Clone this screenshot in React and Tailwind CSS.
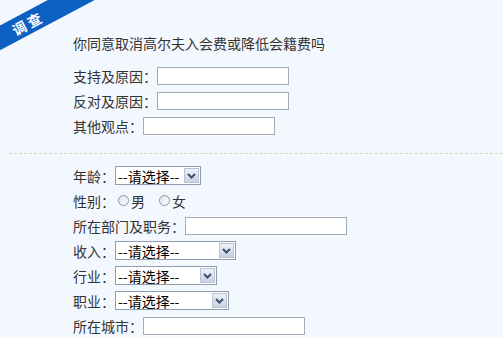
import React from "react";

const font = { fontFamily: '"Noto Sans CJK SC", "Liberation Sans", sans-serif' };

function Input({ w }) {
  return <div className={`h-[18px] ${w} border border-[#a3abb5] bg-white`} />;
}

function Select({ w }) {
  return (
    <div className={`h-[19px] ${w} border border-[#8e9db3] bg-white flex items-center justify-between pl-[2px] pr-[1px]`}>
      <span className="text-[14px] leading-none text-black">--请选择--</span>
      <div className="w-[15px] h-[15px] border border-[#b9c3d3] bg-gradient-to-b from-[#eef1f7] to-[#c9d2e2] flex items-center justify-center">
        <svg width="9" height="6" viewBox="0 0 9 6">
          <path d="M1 1 L4.5 4.5 L8 1" stroke="#3c4f73" strokeWidth="2" fill="none" />
        </svg>
      </div>
    </div>
  );
}

function Radio() {
  return (
    <div className="w-[11px] h-[11px] rounded-full border border-[#8a96a6] bg-gradient-to-br from-[#dfe3ea] to-white" />
  );
}

function Row({ label, children }) {
  return (
    <div className="h-[25px] flex items-center">
      <span className="text-[14px] leading-none text-[#333]">{label}</span>
      {children}
    </div>
  );
}

export default function App() {
  return (
    <div className="relative w-[503px] h-[338px] overflow-hidden bg-[#f3f8fe]" style={font}>
      <div className="absolute left-[-52px] top-[12px] w-[160px] h-[22px] bg-[#0c60c2] -rotate-[28deg] flex items-center justify-center">
        <span className="text-white text-[14px] font-bold leading-none tracking-[3px]">调查</span>
      </div>

      <div className="pl-[73px] pt-[30px]">
        <div className="h-[25px] flex items-center text-[14px] leading-none text-[#333]">
          你同意取消高尔夫入会费或降低会籍费吗
        </div>
        <div className="mt-[8px]">
          <Row label="支持及原因："><Input w="w-[132px]" /></Row>
          <Row label="反对及原因："><Input w="w-[132px]" /></Row>
          <Row label="其他观点："><Input w="w-[132px]" /></Row>
        </div>
      </div>

      <div className="ml-[9px] mt-[15px] border-t border-dashed border-[#d6dabc]" />

      <div className="pl-[73px] pt-[9px]">
        <Row label="年龄："><Select w="w-[86px]" /></Row>
        <Row label="性别：">
          <div className="ml-[3px] flex items-center">
            <Radio />
            <span className="ml-[2px] text-[14px] leading-none text-[#333]">男</span>
            <div className="ml-[14px]"><Radio /></div>
            <span className="ml-[2px] text-[14px] leading-none text-[#333]">女</span>
          </div>
        </Row>
        <Row label="所在部门及职务："><Input w="w-[162px]" /></Row>
        <Row label="收入："><Select w="w-[121px]" /></Row>
        <Row label="行业："><Select w="w-[102px]" /></Row>
        <Row label="职业："><Select w="w-[114px]" /></Row>
        <Row label="所在城市："><Input w="w-[162px]" /></Row>
      </div>
    </div>
  );
}
